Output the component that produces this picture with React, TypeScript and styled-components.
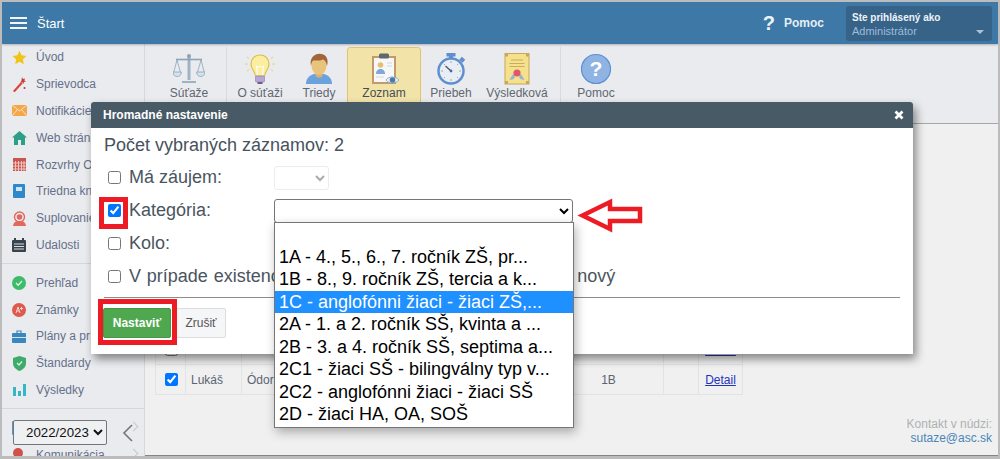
import styled, { createGlobalStyle } from "styled-components";
import type { ReactNode } from "react";

const Global = createGlobalStyle`
  html, body {
    margin: 0;
    padding: 0;
    background: #b9b9b9;
    overflow: hidden;
  }
  * {
    box-sizing: border-box;
  }
`;

const Frame = styled.div`
  position: relative;
  width: 1000px;
  height: 459px;
  border: solid #bcbcbc;
  border-width: 2px 2px 3px 2px;
  overflow: hidden;
  display: flex;
  flex-direction: column;
  font-family: "Liberation Sans", Arial, sans-serif;
  background: #f0f0f0;
`;

const TopBar = styled.header`
  height: 42px;
  flex: none;
  background: #3d78a6;
  display: flex;
  align-items: center;
  color: #fff;
  padding: 0 6px 0 8px;
  box-shadow: 0 1px 2px rgba(0, 0, 0, 0.25);
  position: relative;
  z-index: 2;
`;

const Burger = styled.div`
  width: 17px;
  display: flex;
  flex-direction: column;
  gap: 3px;
  margin-right: 10px;
  span {
    display: block;
    height: 2px;
    background: #f2f6fa;
  }
`;

const Title = styled.div`
  font-size: 13px;
  flex: 1;
`;

const HelpMark = styled.span`
  font-size: 20px;
  font-weight: bold;
  margin-right: 9px;
  color: #eef3f8;
`;

const HelpText = styled.span`
  font-size: 12px;
  font-weight: bold;
  color: #e6eef6;
  margin-right: 22px;
`;

const UserBox = styled.div`
  position: relative;
  width: 146px;
  height: 35px;
  background: #376389;
  border-radius: 3px;
  padding: 5px 6px;
`;

const UserTop = styled.div`
  font-size: 10px;
  font-weight: bold;
  color: #eef3f8;
  line-height: 13px;
`;

const UserName = styled.div`
  font-size: 11px;
  color: #9dbcdc;
  line-height: 15px;
`;

const Caret = styled.span`
  position: absolute;
  right: 8px;
  top: 24px;
  border: 4px solid transparent;
  border-top: 4px solid #a9c2da;
`;

const Body = styled.div`
  flex: 1;
  display: flex;
  min-height: 0;
`;

const Sidebar = styled.nav`
  width: 143px;
  flex: none;
  background: #e9ebee;
  border-right: 1px solid #d6d8db;
  overflow: hidden;
  position: relative;
`;

const MenuItem = styled.div`
  position: relative;
  height: 26.8px;
  display: flex;
  align-items: center;
  font-size: 12px;
  color: #66708a;
  white-space: nowrap;
`;

const MenuIcon = styled.span`
  width: 34px;
  flex: none;
  display: flex;
  justify-content: center;
  svg {
    display: block;
  }
`;

const MenuDivider = styled.div`
  height: 1px;
  background: #d4d6d9;
  margin: 5px 0 5px;
`;

const Chevron = styled.span`
  position: absolute;
  right: 7px;
  top: 9px;
  width: 7px;
  height: 7px;
  border-top: 1px solid #c5c7ca;
  border-right: 1px solid #c5c7ca;
  transform: rotate(45deg);
`;

const YearPicker = styled.div`
  position: absolute;
  left: 11px;
  top: 376px;
  display: flex;
  align-items: center;
  gap: 15px;
`;

const YearSelect = styled.select`
  width: 94px;
  height: 25px;
  font-family: "Liberation Sans", Arial, sans-serif;
  font-size: 13.3px;
  background: #eff0f2;
  color: #111;
  border: 1px solid #767676;
  border-radius: 2px;
  padding-left: 8px;
`;

const Content = styled.div`
  flex: 1;
  min-width: 0;
  display: flex;
  flex-direction: column;
`;

const Ribbon = styled.div`
  height: 80px;
  flex: none;
  background: #e9ebee;
  border-bottom: 1px solid #a5a8ab;
  padding: 3px 0 0 14px;
  display: flex;
  overflow: hidden;
`;

const RibbonItem = styled.div<{ $w: number; $active?: boolean }>`
  width: ${(p) => p.$w}px;
  flex: none;
  height: 76px;
  display: flex;
  flex-direction: column;
  align-items: center;
  padding-top: 5px;
  font-size: 12px;
  line-height: 14px;
  text-align: center;
  color: ${(p) => (p.$active ? "#444d57" : "#5f6770")};
  background: ${(p) => (p.$active ? "#f2e4a8" : "transparent")};
  border: 1px solid ${(p) => (p.$active ? "#e3c36f" : "transparent")};
  border-radius: 3px;
  svg {
    display: block;
    margin-bottom: 1px;
  }
`;

const RibbonDivider = styled.div<{ $l: number; $r: number }>`
  width: 1px;
  height: 56px;
  flex: none;
  background: #d8dade;
  margin-left: ${(p) => p.$l}px;
  margin-right: ${(p) => p.$r}px;
`;

const Main = styled.main`
  flex: 1;
  min-height: 0;
  display: flex;
  flex-direction: column;
  padding: 210px 6px 10px 10px;
  background: #f0f0f0;
  border-bottom: 1px solid #858585;
`;

const Table = styled.table`
  border-collapse: collapse;
  width: 587px;
  table-layout: fixed;
  font-size: 12px;
  color: #5b6470;
  td {
    height: 30px;
    border: 1px solid #e2e3e5;
    padding: 0 5px;
    white-space: nowrap;
    overflow: hidden;
  }
  a {
    color: #2233bb;
  }
`;

const Center = styled.td`
  text-align: center;
`;

const Contact = styled.div`
  margin-top: auto;
  align-self: flex-end;
  text-align: right;
  font-size: 12px;
  line-height: 14px;
  color: #aeb0b3;
  a {
    display: block;
    color: #4a86b8;
    text-decoration: none;
  }
`;

const Modal = styled.section`
  position: absolute;
  left: 89px;
  top: 100px;
  width: 822px;
  height: 252px;
  background: #fff;
  border-radius: 3px 3px 0 0;
  box-shadow: 3px 5px 10px rgba(0, 0, 0, 0.45);
  z-index: 5;
`;

const ModalHead = styled.div`
  height: 26px;
  background: #475a65;
  color: #fff;
  font-size: 12px;
  font-weight: bold;
  display: flex;
  align-items: center;
  justify-content: space-between;
  padding: 0 9px 0 12px;
  border-radius: 3px 3px 0 0;
`;

const ModalBody = styled.div`
  padding: 6px 13px 0;
  color: #4a5560;
  font-size: 18px;
`;

const CountLine = styled.div`
  line-height: 22px;
  margin-bottom: 5px;
  color: #47525d;
`;

const FormRow = styled.div`
  height: 33px;
  display: flex;
  align-items: center;
  white-space: nowrap;
`;

const Check = styled.input`
  width: 13px;
  height: 13px;
  margin: 0 8px 0 4px;
  flex: none;
`;

const FieldLabel = styled.label`
  width: 145px;
  flex: none;
`;

const LongLabel = styled.label`
  word-spacing: 0.8px;
`;

const ShortSelect = styled.select`
  width: 55px;
  height: 24px;
  background: #fff;
  border: 1px solid #e4e4e4;
  border-radius: 3px;
  color: #888;
`;

const WideSelect = styled.select`
  width: 299px;
  height: 24px;
  background: #fff;
  border: 1px solid #767676;
  border-radius: 3px;
  color: #000;
`;

const Rule = styled.div`
  height: 1px;
  background: #8c8c8c;
  margin: 4px 0 10px;
`;

const Actions = styled.div`
  display: flex;
  gap: 5px;
  margin-left: -1px;
`;

const PrimaryButton = styled.button`
  width: 68px;
  height: 30px;
  background: #4fa84f;
  border: 1px solid #459645;
  border-radius: 2px;
  color: #fff;
  font: bold 12px "Liberation Sans", Arial, sans-serif;
`;

const SecondaryButton = styled.button`
  width: 50px;
  height: 30px;
  background: #f5f6f8;
  border: 1px solid #dcdde0;
  border-radius: 2px;
  color: #555;
  font: 12px "Liberation Sans", Arial, sans-serif;
`;

const ListBox = styled.ul`
  position: absolute;
  left: 183px;
  top: 120px;
  width: 300px;
  height: 206px;
  margin: 0;
  padding: 0;
  list-style: none;
  background: #fff;
  border: 1px solid #767676;
  box-shadow: 2px 4px 10px rgba(0, 0, 0, 0.3);
  font-size: 18px;
  color: #000;
  z-index: 6;
`;

const ListOption = styled.li<{ $selected?: boolean }>`
  height: 22.5px;
  line-height: 22.5px;
  padding-left: 4px;
  white-space: nowrap;
  overflow: hidden;
  background: ${(p) => (p.$selected ? "#1e90ff" : "transparent")};
  color: ${(p) => (p.$selected ? "#fff" : "#000")};
`;

const RedBox = styled.div<{ $x: number; $y: number; $w: number; $h: number }>`
  position: absolute;
  left: ${(p) => p.$x}px;
  top: ${(p) => p.$y}px;
  width: ${(p) => p.$w}px;
  height: ${(p) => p.$h}px;
  border: 5px solid #ed1c24;
  z-index: 7;
  pointer-events: none;
`;

const RedArrow = styled.svg`
  position: absolute;
  left: 574px;
  top: 196px;
  z-index: 7;
`;

const Star = () => (
  <svg width="15" height="15" viewBox="0 0 15 15">
    <path d="M7.5 0.8l2.1 4.5 4.9.6-3.6 3.4.9 4.9-4.3-2.4-4.3 2.4.9-4.9L.5 5.9l4.9-.6z" fill="#f0c419" />
  </svg>
);
const Wand = () => (
  <svg width="15" height="16" viewBox="0 0 15 16">
    <path d="M1 15L9 6l1.6 1.4-8 9z" fill="#d9453a" />
    <path d="M10 1l1 2 2-.6-.6 2 1.6 1.2-2 .4-.6 2-1.2-1.7-2 .1 1.2-1.7z" fill="#c9403a" />
    <circle cx="12.5" cy="12" r="1" fill="#b35" />
  </svg>
);
const Envelope = () => (
  <svg width="15" height="11" viewBox="0 0 15 11">
    <rect width="15" height="11" fill="#f2a74a" />
    <path d="M0 0l7.5 6L15 0M0 11l5.5-6.5M15 11L9.5 4.5" stroke="#fbe3bd" strokeWidth="1" fill="none" />
  </svg>
);
const House = () => (
  <svg width="15" height="14" viewBox="0 0 15 14">
    <path d="M7.5 0L15 6.5h-2V14H9V9H6v5H2V6.5H0z" fill="#2f9e88" />
  </svg>
);
const Grid = () => (
  <svg width="13" height="13" viewBox="0 0 13 13">
    <rect width="13" height="13" fill="#c8564f" />
    <path d="M2.5 3v10M5.5 3v10M8.5 3v10M11 3v10M0 5h13M0 8h13M0 11h13" stroke="#f0c5c0" strokeWidth="1" />
  </svg>
);
const Notebook = () => (
  <svg width="12" height="14" viewBox="0 0 12 14">
    <rect width="12" height="14" rx="1" fill="#2f88c9" />
    <rect x="3" y="3" width="6" height="4" fill="#cfe5f5" />
  </svg>
);
const Substitute = () => (
  <svg width="15" height="15" viewBox="0 0 15 15">
    <circle cx="7.5" cy="6" r="5" fill="none" stroke="#e4675c" strokeWidth="1.4" />
    <circle cx="7.5" cy="6" r="2.8" fill="#e4675c" />
    <path d="M1 15c.5-4 3-5 6.5-5s6 1 6.5 5z" fill="#e4675c" />
  </svg>
);
const Events = () => (
  <svg width="14" height="14" viewBox="0 0 14 14">
    <rect y="2" width="14" height="12" rx="1" fill="#39434e" />
    <path d="M2 6h10M2 8.5h10M2 11h10" stroke="#d7dade" strokeWidth="1" />
    <path d="M3 0v3M11 0v3" stroke="#39434e" strokeWidth="2" />
  </svg>
);
const CheckCircle = () => (
  <svg width="14" height="14" viewBox="0 0 14 14">
    <circle cx="7" cy="7" r="7" fill="#3dbb6a" />
    <path d="M4 7l2.2 2.2L10 5" stroke="#d8f3e1" strokeWidth="1.4" fill="none" />
  </svg>
);
const Grades = () => (
  <svg width="14" height="14" viewBox="0 0 14 14">
    <circle cx="7" cy="7" r="7" fill="#dd5a4e" />
    <path d="M4 10l2-6 2 6M5 8h2M9.5 4v3M8 5.5h3" stroke="#f8d5d0" strokeWidth="1" fill="none" />
  </svg>
);
const Briefcase = () => (
  <svg width="14" height="13" viewBox="0 0 14 13">
    <rect y="3" width="14" height="10" rx="1" fill="#3b87bd" />
    <path d="M5 3V1h4v2" stroke="#3b87bd" strokeWidth="1.2" fill="none" />
    <path d="M0 7.5h14" stroke="#cfe3f1" strokeWidth="1" />
  </svg>
);
const Shield = () => (
  <svg width="13" height="15" viewBox="0 0 13 15">
    <path d="M6.5 0L13 2v5c0 4-3 6.5-6.5 8C3 13.5 0 11 0 7V2z" fill="#3eab6b" />
    <path d="M4 7l2 2 3-3.5" stroke="#d8f3e1" strokeWidth="1.2" fill="none" />
  </svg>
);
const Bars = () => (
  <svg width="13" height="12" viewBox="0 0 13 12">
    <rect y="3" width="3" height="9" fill="#35b8c4" />
    <rect x="5" y="7" width="3" height="5" fill="#35b8c4" />
    <rect x="10" width="3" height="12" fill="#35b8c4" />
  </svg>
);
const Files = () => (
  <svg width="14" height="14" viewBox="0 0 14 14">
    <rect width="14" height="14" rx="1" fill="#5a94c4" />
  </svg>
);
const Speech = () => (
  <svg width="14" height="14" viewBox="0 0 14 14">
    <circle cx="6" cy="5" r="5" fill="#d0514a" />
    <path d="M3 9l-1 4 4-3z" fill="#d0514a" />
  </svg>
);

const Scales = () => (
  <svg width="32" height="32" viewBox="0 0 32 32">
    <path d="M16 2v25" stroke="#9db2c4" strokeWidth="3" />
    <path d="M3 6.5h26" stroke="#8ea3b5" strokeWidth="1.6" />
    <path d="M9 28h14v2H9z" fill="#9db2c4" />
    <path d="M4 7L0.8 19M4 7l3.4 12M28 7l-3.4 12M28 7l3.2 12" stroke="#8ea3b5" strokeWidth="0.8" fill="none" />
    <path d="M0 19h8.4c0 6-8.4 6-8.4 0zM23.6 19H32c0 6-8.4 6-8.4 0z" fill="#cfe3f0" stroke="#8ea3b5" strokeWidth="0.8" />
    <circle cx="16" cy="3" r="2" fill="#8ea3b5" />
  </svg>
);
const Bulb = () => (
  <svg width="32" height="32" viewBox="0 0 32 32">
    <path d="M16 2C10 2 7 6.500 7 11c0 5 4 7 4.500 12h9C21 18 25 16 25 11c0-4.500-3-9-9-9z" fill="#fbeea3" stroke="#d9c04a" strokeWidth="1.2" />
    <path d="M13.500 22l-1-9 2 1.500L16 13l1.500 1.500 2-1.500-1 9" stroke="#fff" strokeWidth="1" fill="none" />
    <rect x="11.500" y="23" width="9" height="6" rx="1" fill="#b9a6d9" stroke="#8c7bad" strokeWidth="0.6" />
    <rect x="13.500" y="29" width="5" height="2" fill="#6c6080" />
    <path d="M3 4l2 1.500M29 4l-2 1.500M1 11h3M28 11h3M3 18l2-1.500M29 18l-2-1.500" stroke="#e3d07a" strokeWidth="1" />
  </svg>
);
const Person = () => (
  <svg width="32" height="32" viewBox="0 0 32 32">
    <path d="M3 31c0-6 4-9 8-10h10c4 1 8 4 8 10z" fill="#6aa2dc" />
    <path d="M12.500 17h7v6c-1.500 2-5.500 2-7 0z" fill="#dcb070" />
    <ellipse cx="16" cy="13" rx="7.500" ry="9" fill="#e9c27c" />
    <path d="M8 13C6 4 13 0 18 1c5 0 8 5 6 12-1-4-2-6-4-6.500-3 1.500-8 1-9.500 1C9 8.500 8.500 10 8 13z" fill="#a0663a" />
  </svg>
);
const Clipboard = () => (
  <svg width="32" height="32" viewBox="0 0 32 32">
    <rect x="4" y="3" width="24" height="28" fill="#c49a6c" />
    <rect x="6" y="5" width="20" height="24" fill="#f6f7f9" />
    <rect x="11" y="0.500" width="10" height="5" rx="1.500" fill="#5f666e" />
    <circle cx="12.500" cy="12" r="2.800" fill="#e6c06f" />
    <path d="M8 21c0-3.500 2-5 4.500-5s4.500 1.500 4.500 5z" fill="#7ea8d8" />
    <path d="M19 10h5M19 13h5M8 24h8" stroke="#d4d7dc" strokeWidth="1" />
    <path d="M18 27c2-4 10-4 13 0-3 4-11 4-13 0z" fill="#e9f0f8" stroke="#7ea2c4" strokeWidth="0.8" />
    <circle cx="24.500" cy="27" r="2.800" fill="#4d7ba6" />
  </svg>
);
const Stopwatch = () => (
  <svg width="32" height="32" viewBox="0 0 32 32">
    <rect x="11.500" y="0" width="9" height="3.500" fill="#5f8fce" />
    <rect x="14" y="3" width="4" height="3" fill="#5f8fce" />
    <rect x="25" y="4.500" width="4.500" height="4" fill="#5f8fce" transform="rotate(42 27 6.500)" />
    <circle cx="16" cy="18" r="12.500" fill="#e9eef5" stroke="#5f8fce" strokeWidth="2.500" />
    <path d="M16 18l-5.500-5" stroke="#47525d" strokeWidth="1.200" />
    <circle cx="16" cy="18" r="1.400" fill="#3f6ea8" />
    <path d="M16 8v2M16 26v2M6 18h2M24 18h2M9 11l1 1M23 11l-1 1M9 25l1-1M23 25l-1-1" stroke="#8a95a3" strokeWidth="0.8" />
  </svg>
);
const Diploma = () => (
  <svg width="32" height="32" viewBox="0 0 32 32">
    <rect x="4" y="0.500" width="24" height="30.500" fill="#f5e08c" stroke="#c8a85a" strokeWidth="1" />
    <path d="M4 0.500h3v3H4zM25 0.500h3v3h-3zM4 28h3v3H4zM25 28h3v3h-3z" fill="#c8a85a" />
    <path d="M10 7h12M8.500 10.500h15M8.500 13.500h15" stroke="#c9ab62" strokeWidth="1.200" />
    <path d="M12 21l-3.500 6 3.500-.8 2-1.600zM20 21l3.500 6-3.500-.8-2-1.600z" fill="#8fb4dc" />
    <circle cx="16" cy="20" r="3.600" fill="#e0566a" />
  </svg>
);
const HelpCircle = () => (
  <svg width="32" height="32" viewBox="0 0 32 32">
    <circle cx="16" cy="16" r="14.500" fill="#8fb4e4" stroke="#5f8fce" strokeWidth="1.200" />
    <text x="16" y="23" textAnchor="middle" fontSize="21" fontWeight="bold" fontFamily="Liberation Sans, Arial, sans-serif" fill="#fff">?</text>
  </svg>
);

const menuTop: [ReactNode, string][] = [
  [<Star />, "Úvod"],
  [<Wand />, "Sprievodca"],
  [<Envelope />, "Notifikácie"],
  [<House />, "Web stránka"],
  [<Grid />, "Rozvrhy Olympiád"],
  [<Notebook />, "Triedna kniha"],
  [<Substitute />, "Suplovanie"],
  [<Events />, "Udalosti"],
];

const menuMiddle: [ReactNode, string][] = [
  [<CheckCircle />, "Prehľad"],
  [<Grades />, "Známky"],
  [<Briefcase />, "Plány a prípravy"],
  [<Shield />, "Štandardy"],
  [<Bars />, "Výsledky"],
];

const categories = [
  "1A - 4., 5., 6., 7. ročník ZŠ, pr...",
  "1B - 8., 9. ročník ZŠ, tercia a k...",
  "1C - anglofónni žiaci - žiaci ZŠ,...",
  "2A - 1. a 2. ročník SŠ, kvinta a ...",
  "2B - 3. a 4. ročník SŠ, septima a...",
  "2C1 - žiaci SŠ - bilingválny typ v...",
  "2C2 - anglofónni žiaci - žiaci SŠ",
  "2D - žiaci HA, OA, SOŠ",
];

export default function App() {
  return (
    <Frame>
      <Global />
      <TopBar>
        <Burger>
          <span />
          <span />
          <span />
        </Burger>
        <Title>Štart</Title>
        <HelpMark>?</HelpMark>
        <HelpText>Pomoc</HelpText>
        <UserBox>
          <UserTop>Ste prihlásený ako</UserTop>
          <UserName>Administrátor</UserName>
          <Caret />
        </UserBox>
      </TopBar>
      <Body>
        <Sidebar>
          {menuTop.map(([icon, label]) => (
            <MenuItem key={label}>
              <MenuIcon>{icon}</MenuIcon>
              {label}
            </MenuItem>
          ))}
          <MenuDivider />
          {menuMiddle.map(([icon, label]) => (
            <MenuItem key={label}>
              <MenuIcon>{icon}</MenuIcon>
              {label}
            </MenuItem>
          ))}
          <MenuDivider />
          <MenuItem>
            <MenuIcon>
              <Files />
            </MenuIcon>
            Súbory
            <Chevron />
          </MenuItem>
          <MenuItem>
            <MenuIcon>
              <Speech />
            </MenuIcon>
            Komunikácia
            <Chevron />
          </MenuItem>
          <YearPicker>
            <YearSelect defaultValue="2022/2023">
              <option>2022/2023</option>
            </YearSelect>
            <svg width="12" height="18" viewBox="0 0 12 18">
              <path d="M10 1L2 9l8 8" stroke="#6e7680" strokeWidth="1.600" fill="none" />
            </svg>
          </YearPicker>
        </Sidebar>
        <Content>
          <Ribbon>
            <RibbonItem $w={60}>
              <Scales />
              Súťaže
            </RibbonItem>
            <RibbonDivider $l={7} $r={2} />
            <RibbonItem $w={62}>
              <Bulb />O súťaži
            </RibbonItem>
            <RibbonItem $w={56}>
              <Person />
              Triedy
            </RibbonItem>
            <RibbonItem $w={74} $active>
              <Clipboard />
              Zoznam žiakov
            </RibbonItem>
            <RibbonItem $w={60}>
              <Stopwatch />
              Priebeh súťaže
            </RibbonItem>
            <RibbonItem $w={72}>
              <Diploma />
              Výsledková listina
            </RibbonItem>
            <RibbonDivider $l={7} $r={5} />
            <RibbonItem $w={60}>
              <HelpCircle />
              Pomoc
            </RibbonItem>
          </Ribbon>
          <Main>
            <Table>
              <colgroup>
                <col width="30" />
                <col width="56" />
                <col width="35" />
                <col width="277" />
                <col width="110" />
                <col width="35" />
                <col width="44" />
              </colgroup>
              <tbody>
                <tr>
                  <Center>
                    <input type="checkbox" />
                  </Center>
                  <td />
                  <td />
                  <td />
                  <td />
                  <td />
                  <Center>
                    <a href="#detail">Detail</a>
                  </Center>
                </tr>
                <tr>
                  <Center>
                    <input type="checkbox" defaultChecked />
                  </Center>
                  <td>Lukáš</td>
                  <td>Ódor</td>
                  <td />
                  <Center>1B</Center>
                  <td />
                  <Center>
                    <a href="#detail">Detail</a>
                  </Center>
                </tr>
              </tbody>
            </Table>
            <Contact>
              Kontakt v núdzi:
              <a href="mailto:sutaze@asc.sk">sutaze@asc.sk</a>
            </Contact>
          </Main>
        </Content>
      </Body>

      <Modal>
        <ModalHead>
          Hromadné nastavenie
          <svg width="10" height="10" viewBox="0 0 10 10">
            <path d="M1.500 1.500l7 7M8.500 1.500l-7 7" stroke="#fff" strokeWidth="2.800" />
          </svg>
        </ModalHead>
        <ModalBody>
          <CountLine>Počet vybraných záznamov: 2</CountLine>
          <FormRow>
            <Check type="checkbox" />
            <FieldLabel>Má záujem:</FieldLabel>
            <ShortSelect disabled />
          </FormRow>
          <FormRow>
            <Check type="checkbox" defaultChecked />
            <FieldLabel>Kategória:</FieldLabel>
            <WideSelect />
          </FormRow>
          <FormRow>
            <Check type="checkbox" />
            <FieldLabel>Kolo:</FieldLabel>
          </FormRow>
          <FormRow>
            <Check type="checkbox" />
            <LongLabel>V prípade existencie záznamov ponechať, inak vytvoriť nový</LongLabel>
          </FormRow>
          <Rule />
          <Actions>
            <PrimaryButton>Nastaviť</PrimaryButton>
            <SecondaryButton>Zrušiť</SecondaryButton>
          </Actions>
        </ModalBody>
        <ListBox>
          <ListOption>&nbsp;</ListOption>
          {categories.map((c) => (
            <ListOption key={c} $selected={c.startsWith("1C")}>
              {c}
            </ListOption>
          ))}
        </ListBox>
      </Modal>

      <RedBox $x={97} $y={195} $w={29} $h={32} />
      <RedBox $x={96} $y={297} $w={79} $h={46} />
      <RedArrow width="70" height="42" viewBox="0 0 70 42">
        <path d="M6.500 17.500L34 4v7h30v12H34v8z" fill="#fff" stroke="#ed1c24" strokeWidth="4.500" />
      </RedArrow>
    </Frame>
  );
}
